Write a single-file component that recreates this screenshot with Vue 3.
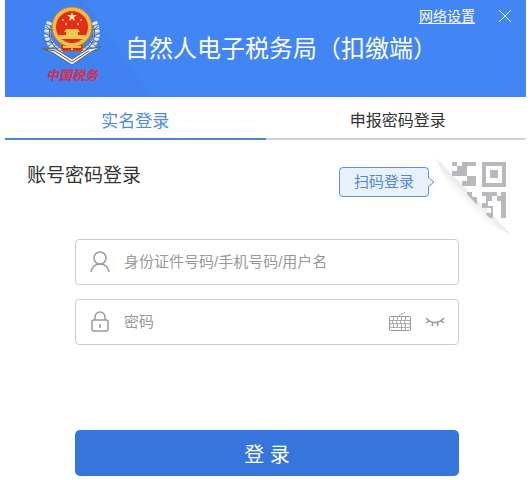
<script setup>
import { ref } from 'vue'

const tab = ref('real')
const account = ref('')
const password = ref('')
const shown = ref(false)
</script>

<template>
  <main class="window">
    <header class="head">
      <div class="brand">
        <svg class="emblem" viewBox="0 0 62 62" aria-hidden="true">
          <g fill="none" stroke="#e2e6eb" stroke-width="6" stroke-dasharray="3 1">
            <path d="M9 17C3 30 7 41 21 48" />
            <path d="M53 17C59 30 55 41 41 48" />
          </g>
          <g fill="none" stroke="#59636b" stroke-width="1">
            <path d="M5 21l6 5M3 28l8 4M4 36l8 2M9 43l7 0M57 21l-6 5M59 28l-8 4M58 36l-8 2M53 43l-7 0" />
            <path d="M10 20C6 30 9 40 20 47M52 20C56 30 53 40 42 47" />
          </g>
          <path d="M1 43l14 1 16 10 16-10 13-2-10 5-19 13L12 48z" fill="#f4f5f7" stroke="#5a636c" />
          <path d="M3 44l11 2 17 11 17-11" fill="none" stroke="#4c5966" />
          <path d="M19 37h24l-2 9H21z" fill="#dc271c" stroke="#a57324" />
          <circle cx="31" cy="22" r="18" fill="#e42d18" stroke="#edbd48" stroke-width="4" />
          <circle cx="31" cy="22" r="20" fill="none" stroke="#b6842e" />
          <path d="M31 7l1 3h4l-3 2 1 4-3-2-3 2 1-4-3-2h4z" fill="#ffe8a0" />
          <g fill="#ffd68c"><circle cx="22" cy="15" r="1" /><circle cx="40" cy="15" r="1" /><circle cx="25" cy="19" r="1" /><circle cx="37" cy="19" r="1" /></g>
          <path d="M25 24h12l2 3h-2v3h7v4H18v-4h7v-3h-2z" fill="#f2c84a" />
          <path d="M22 42h18M31 38v7" stroke="#edbd48" stroke-width="2" />
        </svg>
        <span class="motto">中国税务</span>
      </div>
      <h1>自然人电子税务局（扣缴端）</h1>
      <nav class="tools">
        <a href="#network">网络设置</a>
        <button type="button" class="plain" aria-label="关闭">
          <svg width="12" height="12" viewBox="0 0 12 12"><path d="M0 0l12 12M12 0L0 12" fill="none" stroke="#e6efff" /></svg>
        </button>
      </nav>
    </header>

    <div class="tabs" role="tablist">
      <button type="button" role="tab" :aria-selected="tab === 'real'" :class="{ active: tab === 'real' }" @click="tab = 'real'">实名登录</button>
      <button type="button" role="tab" :aria-selected="tab === 'report'" :class="{ active: tab === 'report' }" @click="tab = 'report'">申报密码登录</button>
    </div>

    <section class="mode">
      <h2>账号密码登录</h2>
      <button type="button" class="scan">
        扫码登录
        <svg class="arrow" width="7" height="12" viewBox="0 0 7 12"><path d="M0 1l6 5-6 5" fill="#e9f1fd" stroke="#5c91dc" /></svg>
      </button>
      <button type="button" class="plain code" aria-label="二维码">
        <svg width="78" height="80" viewBox="0 0 78 80">
          <defs>
            <linearGradient id="fold" x1="36" y1="44" x2="31" y2="49" gradientUnits="userSpaceOnUse">
              <stop offset="0" stop-color="#ededed" />
              <stop offset="1" stop-color="#ffffff" />
            </linearGradient>
            <clipPath id="corner"><path d="M0 0H78V80H69L0 8z" /></clipPath>
          </defs>
          <path d="M0 4L75 80L54 72L12 32z" fill="url(#fold)" />
          <g clip-path="url(#corner)">
            <path fill="#b9b9bd" fill-rule="evenodd" d="M46 8h24v25H46zM50 12v17h16V12zM54 16h8v8h-8z" />
            <path fill="#b9b9bd" d="M16 8h5v4h-5zM26 8h14v4h-9v10h5v5h-5v-5H16v-5h5v-5h5zM36 22h4v10H26v-5h10zM26 43h5v-5h5v5h5v12H26zM46 38h15v4h-5v5h-4v5h5v5h4v-5h4v-5h-4v-5h4v-4h5v26h-5V52h-4v5h-4v7H50v-5h5v-5h-9v-5h4v-7h-4z" />
          </g>
        </svg>
      </button>
    </section>

    <form @submit.prevent>
      <label class="field">
        <svg width="20" height="22" viewBox="0 0 20 22" fill="none" stroke="#999" stroke-width="1.500"><circle cx="10" cy="7" r="6" /><path d="M1 21c1-5 4-8 9-8s8 3 9 8" /></svg>
        <input v-model="account" type="text" aria-label="账号" placeholder="身份证件号码/手机号码/用户名" />
      </label>
      <div class="field">
        <svg width="20" height="22" viewBox="0 0 20 22" fill="none" stroke="#999" stroke-width="1.500"><rect x="2" y="9" width="16" height="11" rx="2" /><path d="M5 9V6a5 5 0 0 1 10 0v3M10 13v4" /></svg>
        <input v-model="password" :type="shown ? 'text' : 'password'" aria-label="密码" placeholder="密码" />
        <button type="button" class="plain" aria-label="软键盘">
          <svg width="24" height="20" viewBox="0 0 24 20" fill="none" stroke="#aaa"><rect x="2.500" y="4.500" width="21" height="14" rx="1" stroke="#999" /><path d="M3 8.500h20M3 11.500h20M3 15.500h20M6.500 5v3M10.500 5v3M14.500 5v3M18.500 5v3M5.500 9v3M9.500 9v3M13.500 9v3M17.500 9v3M6.500 12v3M10.500 12v3M14.500 12v7M18.500 12v7M12 4l2-2h2l2-2" /></svg>
        </button>
        <button type="button" class="plain" aria-label="显示密码" @click="shown = !shown">
          <svg width="20" height="12" viewBox="0 0 20 12" fill="none" stroke="#999" stroke-width="1.500"><path d="M1 2c5 6 13 6 18 0M4 5L1 7M8 6L7 10M12 6l1 4M16 5l3 2" /></svg>
        </button>
      </div>
      <button type="submit" class="login">登 录</button>
    </form>
  </main>
</template>

<style>
body {
  margin: 0;
  background: #fff;
}
</style>

<style scoped>
.window {
  padding: 0 5px;
  color: #333;
  font-family: "Liberation Sans", "Noto Sans CJK SC", sans-serif;
}

button,
input {
  font: inherit;
  color: inherit;
}

button {
  cursor: pointer;
}

.plain {
  display: flex;
  padding: 0;
  border: 0;
  background: none;
}

.head {
  position: relative;
  display: flex;
  align-items: center;
  gap: 22px;
  box-sizing: border-box;
  height: 97px;
  padding: 0 36px;
  background: linear-gradient(55deg, #4082f1 25%, #4285f5 25%);
  color: #fff;
}

.brand {
  display: flex;
  flex-direction: column;
  align-items: center;
  width: 62px;
  padding-bottom: 8px;
}

.emblem {
  width: 62px;
  height: 62px;
}

.motto {
  color: #d82c49;
  font-size: 13px;
  font-style: italic;
  font-weight: 700;
  line-height: 18px;
}

h1 {
  margin: 0;
  font-size: 24px;
  font-weight: 400;
  line-height: 32px;
  white-space: nowrap;
}

.tools {
  position: absolute;
  top: 6px;
  right: 15px;
  display: flex;
  align-items: center;
  gap: 24px;
  font-size: 14px;
  line-height: 20px;
}

.tools a {
  color: #fff;
  text-underline-offset: 2px;
}

.tabs {
  display: grid;
  grid-template-columns: 1fr 1fr;
}

.tabs button {
  height: 43px;
  padding: 2px 0 0 4px;
  border: 0;
  border-bottom: 2px solid #d0d0d3;
  background: none;
  color: #333;
  font-size: 16px;
}

.tabs .active {
  padding: 4px 0 0;
  border-color: #4b82cf;
  color: #4c8be0;
  font-size: 17px;
}

.mode {
  display: flex;
  align-items: flex-start;
  padding: 14px 12px 0 22px;
}

h2 {
  flex: 1;
  margin: 8px 0 0;
  font-size: 19px;
  font-weight: 400;
  line-height: 28px;
}

.scan {
  position: relative;
  margin: 13px 7px 0 0;
  height: 30px;
  padding: 0 14px;
  border: 1px solid #5c91dc;
  border-radius: 4px;
  background: #e9f1fd;
  color: #5088df;
  font-size: 15px;
  line-height: 28px;
}

.arrow {
  position: absolute;
  top: 8px;
  right: -7px;
}

form {
  display: grid;
  gap: 14px;
  margin: 5px 67px 0 70px;
}

.field {
  display: flex;
  align-items: center;
  gap: 14px;
  box-sizing: border-box;
  height: 46px;
  padding: 0 13px 0 14px;
  border: 1px solid #ccc;
  border-radius: 4px;
}

.field input {
  flex: 1;
  min-width: 0;
  padding: 0;
  border: 0;
  outline: 0;
  background: none;
  font-size: 15px;
  line-height: 24px;
}

.field input::placeholder {
  color: #999;
  opacity: 1;
}

.login {
  height: 46px;
  margin-top: 71px;
  padding: 0;
  border: 0;
  border-radius: 5px;
  background: #3675db;
  color: #fff;
  font-size: 20px;
}
</style>
